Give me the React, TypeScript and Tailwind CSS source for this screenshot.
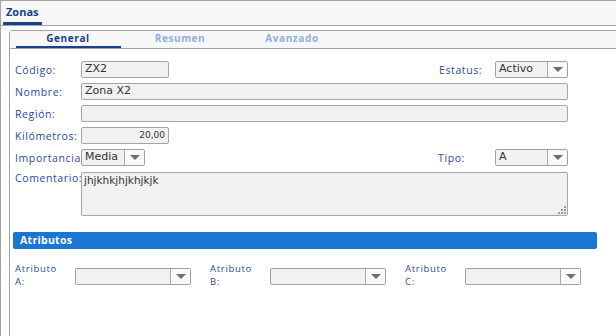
import React from "react";

const labelCls =
  "text-[10.5px] tracking-[0.6px] text-[#2a4aa6] [font-family:'Open_Sans',sans-serif] leading-[12px]";
const valueFont = "text-[#333] [font-family:'DejaVu_Sans',sans-serif]";
const valueCls = `text-[11px] ${valueFont}`;

const Arrow = () => (
  <div className="w-[20px] h-full border-l border-[#a9a9a9] bg-[#f9f9f9] flex items-center justify-center">
    <svg width="10" height="6" viewBox="0 0 10 6">
      <path d="M0 0 L10 0 L5 5 Z" fill="#6e6e6e" />
    </svg>
  </div>
);

const Select = ({ value, className }: { value?: string; className: string }) => (
  <div
    className={`h-[17px] flex items-stretch border border-[#a0a0a0] rounded-[2px] bg-[#f1f1f1] overflow-hidden ${className}`}
  >
    <div className={`flex-1 px-[3px] flex items-center ${valueCls}`}>{value}</div>
    <Arrow />
  </div>
);

const Input = ({
  value,
  className,
  right,
}: {
  value?: string;
  className: string;
  right?: boolean;
}) => (
  <div
    className={`h-[17px] border border-[#a5a5a5] rounded-[2px] bg-[#f1f1f1] flex items-center px-[3px] ${
      right ? `justify-end text-[9px] ${valueFont}` : valueCls
    } ${className}`}
  >
    {value}
  </div>
);

const Label = ({ children, className = "w-[66px]" }: { children: React.ReactNode; className?: string }) => (
  <div className={`${labelCls} shrink-0 ${className}`}>{children}</div>
);

const tabs = ["General", "Resumen", "Avanzado"];

export default function App() {
  return (
    <div className="w-[616px] h-[336px] bg-white overflow-hidden">
      <div className="h-full border-l border-t border-[#a3a3a3] flex flex-col">
        {/* top header */}
        <div className="h-[25px] shrink-0 bg-[#f7f7f7] border-b border-[#a3a3a3] flex items-end pl-[2px]">
          <div className="w-[39px] h-full flex flex-col justify-end">
            <div className="text-[11px] font-bold text-[#1b3f8f] [font-family:'Open_Sans',sans-serif] pl-[3px] leading-[14px] mb-[3px]">
              Zonas
            </div>
            <div className="h-[3px] bg-[#1b3f8f] rounded-t-[1px]" />
          </div>
        </div>

        <div className="flex-1 pl-[8px] pt-[4px]">
          <div className="h-full border-l border-t border-[#a3a3a3] rounded-tl-[4px] flex flex-col">
            {/* tabs */}
            <div className="h-[18px] shrink-0 bg-[#f7f7f7] border-b border-[#a3a3a3] flex pl-[2px]">
              {tabs.map((t, i) => (
                <div key={t} className="w-[112px] h-full flex flex-col items-center">
                  <div
                    className={`flex-1 flex items-center text-[10px] font-bold tracking-[0.6px] [font-family:'Open_Sans',sans-serif] ${
                      i === 0 ? "text-[#1b3f8f]" : "text-[#8db0de]"
                    }`}
                  >
                    {t}
                  </div>
                  <div className={`w-[105px] h-[2px] ${i === 0 ? "bg-[#1b3f8f]" : ""}`} />
                </div>
              ))}
            </div>

            {/* form */}
            <div className="pl-[5px] pt-[12px] w-[558px] flex flex-col gap-[5px]">
              <div className="flex items-center h-[17px]">
                <Label>Código:</Label>
                <Input value="ZX2" className="w-[88px]" />
                <div className="flex-1" />
                <Label className="w-[56px]">Estatus:</Label>
                <Select value="Activo" className="w-[73px]" />
              </div>
              <div className="flex items-center h-[17px]">
                <Label>Nombre:</Label>
                <Input value="Zona X2" className="flex-1" />
              </div>
              <div className="flex items-center h-[17px]">
                <Label>Región:</Label>
                <Input className="flex-1" />
              </div>
              <div className="flex items-center h-[17px]">
                <Label>Kilómetros:</Label>
                <Input value="20,00" right className="w-[88px]" />
              </div>
              <div className="flex items-center h-[17px]">
                <Label className="w-[66px] tracking-[0.3px]">Importancia:</Label>
                <Select value="Media" className="w-[64px]" />
                <div className="flex-1" />
                <Label className="w-[57px]">Tipo:</Label>
                <Select value="A" className="w-[73px]" />
              </div>
              <div className="flex items-start mt-[1px]">
                <Label>Comentario:</Label>
                <div
                  className={`relative flex-1 h-[44px] border border-[#a5a5a5] rounded-[2px] bg-[#f1f1f1] px-[2px] pt-[1px] ${valueFont} text-[10.5px] leading-[13px]`}
                >
                  jhjkhkjhjkhjkjk
                  <svg className="absolute right-[1px] bottom-[1px]" width="8" height="8" viewBox="0 0 8 8">
                    <rect x="6" y="0" width="2" height="2" fill="#9a9a9a" />
                    <rect x="3" y="3" width="2" height="2" fill="#9a9a9a" />
                    <rect x="6" y="3" width="2" height="2" fill="#9a9a9a" />
                    <rect x="0" y="6" width="2" height="2" fill="#9a9a9a" />
                    <rect x="3" y="6" width="2" height="2" fill="#9a9a9a" />
                    <rect x="6" y="6" width="2" height="2" fill="#9a9a9a" />
                  </svg>
                </div>
              </div>
            </div>

            {/* Atributos */}
            <div className="ml-[3px] mt-[16px] w-[584px] h-[17px] bg-[#1976d2] rounded-[2px] flex items-center pl-[7px]">
              <span className="text-[10.5px] font-bold text-white tracking-[0.3px] [font-family:'Open_Sans',sans-serif]">
                Atributos
              </span>
            </div>

            <div className="pl-[5px] mt-[13px] flex items-start">
              {["A", "B", "C"].map((l, i) => (
                <div key={l} className={`flex items-start ${i > 0 ? "ml-[19px]" : ""}`}>
                  <div className="w-[60px] shrink-0 flex flex-col text-[9.5px] tracking-[0.7px] text-[#2a4aa6] [font-family:'Open_Sans',sans-serif] leading-[13px]">
                    <span>Atributo</span>
                    <span>{l}:</span>
                  </div>
                  <div className="mt-[6px]">
                    <Select className="w-[116px]" />
                  </div>
                </div>
              ))}
            </div>
          </div>
        </div>
      </div>
    </div>
  );
}
